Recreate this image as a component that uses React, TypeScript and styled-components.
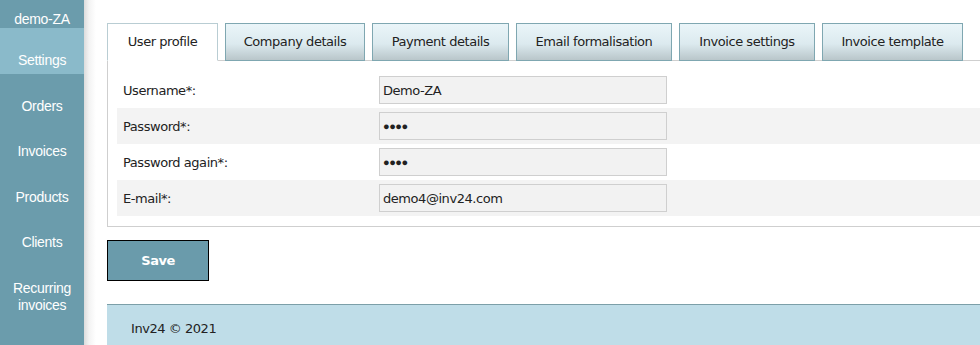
import React from "react";
import styled, { createGlobalStyle } from "styled-components";

const Global = createGlobalStyle`
  html, body { margin: 0; padding: 0; background: #fff; overflow: hidden; }
  body { font-family: Tahoma, "DejaVu Sans", "Liberation Sans", sans-serif; font-size: 14px; color: #222; }
  * { box-sizing: border-box; }
`;

const Page = styled.div`
  display: flex;
  width: 100%;
  height: 345px;
`;

const Sidebar = styled.nav`
  width: 84px;
  flex: none;
  background: #6b9cac;
  display: flex;
  flex-direction: column;
  font-family: "Liberation Sans", sans-serif;
  font-size: 14px;
  color: #fff;
  letter-spacing: -0.3px;
`;

const Account = styled.div`
  height: 28px;
  padding-top: 11px;
  text-align: center;
  line-height: 16px;
`;

const NavItem = styled.div<{ $active?: boolean }>`
  height: 45.5px;
  padding-top: 24px;
  text-align: center;
  line-height: 17px;
  background: ${(p) => (p.$active ? "#8abaca" : "transparent")};
`;

const Main = styled.main`
  flex: 1;
  min-width: 0;
  padding: 23px 0 0 23px;
  background: linear-gradient(to right, #dcdcdc 0px, #f3f3f3 5px, #fff 12px);
  display: flex;
  flex-direction: column;
  font-family: "DejaVu Sans", sans-serif;
  font-size: 13px;
  letter-spacing: -0.45px;
`;

const Tabs = styled.div`
  display: flex;
  gap: 7px;
  height: 38px;
  position: relative;
  z-index: 1;
`;

const Tab = styled.div<{ $active?: boolean; $w: number }>`
  width: ${(p) => p.$w}px;
  flex: none;
  height: 38px;
  display: flex;
  align-items: center;
  justify-content: center;
  padding-bottom: 2px;
  border: 1px solid ${(p) => (p.$active ? "#b9cdd3" : "#7fa7b1")};
  border-bottom: ${(p) => (p.$active ? "1px solid #fff" : "1px solid #7fa7b1")};
  background: ${(p) =>
    p.$active
      ? "#fff"
      : "linear-gradient(to bottom, #eaf5f9 0%, #dceaef 55%, #b9c6ca 100%)"};
  color: #222;
`;

const Panel = styled.section`
  margin-top: -1px;
  border: 1px solid #cfcfcf;
  border-right: none;
  padding: 11px 0 10px 9px;
`;

const Row = styled.div<{ $shaded?: boolean }>`
  display: flex;
  align-items: center;
  height: 36px;
  background: ${(p) => (p.$shaded ? "#f3f3f3" : "#fff")};
  padding-left: 6px;
`;

const Label = styled.div`
  width: 256px;
  flex: none;
`;

const Field = styled.div`
  width: 288px;
  height: 28px;
  background: #f2f2f2;
  border: 1px solid #cfcfcf;
  display: flex;
  align-items: center;
  padding-left: 3px;
`;

const Dots = styled.span`
  font-size: 11px;
  letter-spacing: -0.5px;
  font-family: "Liberation Sans", sans-serif;
`;

const SaveButton = styled.button`
  margin-top: 13px;
  width: 102px;
  height: 41px;
  background: #6a9bab;
  border: 1px solid #000;
  color: #fff;
  font-family: "DejaVu Sans", sans-serif;
  font-weight: bold;
  font-size: 13px;
  letter-spacing: -0.5px;
  padding: 0;
`;

const Footer = styled.footer`
  margin-top: 23px;
  height: 60px;
  background: #bfdde8;
  border-top: 1px solid #7c9fa8;
  padding: 16px 0 0 24px;
`;

const tabs = [
  { label: "User profile", w: 111 },
  { label: "Company details", w: 140 },
  { label: "Payment details", w: 137 },
  { label: "Email formalisation", w: 156 },
  { label: "Invoice settings", w: 136 },
  { label: "Invoice template", w: 141 },
];

const rows = [
  { label: "Username*:", value: "Demo-ZA" },
  { label: "Password*:", value: "●●●●", dots: true },
  { label: "Password again*:", value: "●●●●", dots: true },
  { label: "E-mail*:", value: "demo4@inv24.com" },
];

export default function App() {
  return (
    <>
      <Global />
      <Page>
        <Sidebar>
          <Account>demo-ZA</Account>
          <NavItem $active>Settings</NavItem>
          <NavItem>Orders</NavItem>
          <NavItem>Invoices</NavItem>
          <NavItem>Products</NavItem>
          <NavItem>Clients</NavItem>
          <NavItem>
            Recurring
            <br />
            invoices
          </NavItem>
        </Sidebar>
        <Main>
          <Tabs>
            {tabs.map((t, i) => (
              <Tab key={t.label} $w={t.w} $active={i === 0}>
                {t.label}
              </Tab>
            ))}
          </Tabs>
          <Panel>
            {rows.map((r, i) => (
              <Row key={r.label} $shaded={i % 2 === 1}>
                <Label>{r.label}</Label>
                <Field>{r.dots ? <Dots>{r.value}</Dots> : r.value}</Field>
              </Row>
            ))}
          </Panel>
          <div>
            <SaveButton>Save</SaveButton>
          </div>
          <Footer>Inv24 © 2021</Footer>
        </Main>
      </Page>
    </>
  );
}
